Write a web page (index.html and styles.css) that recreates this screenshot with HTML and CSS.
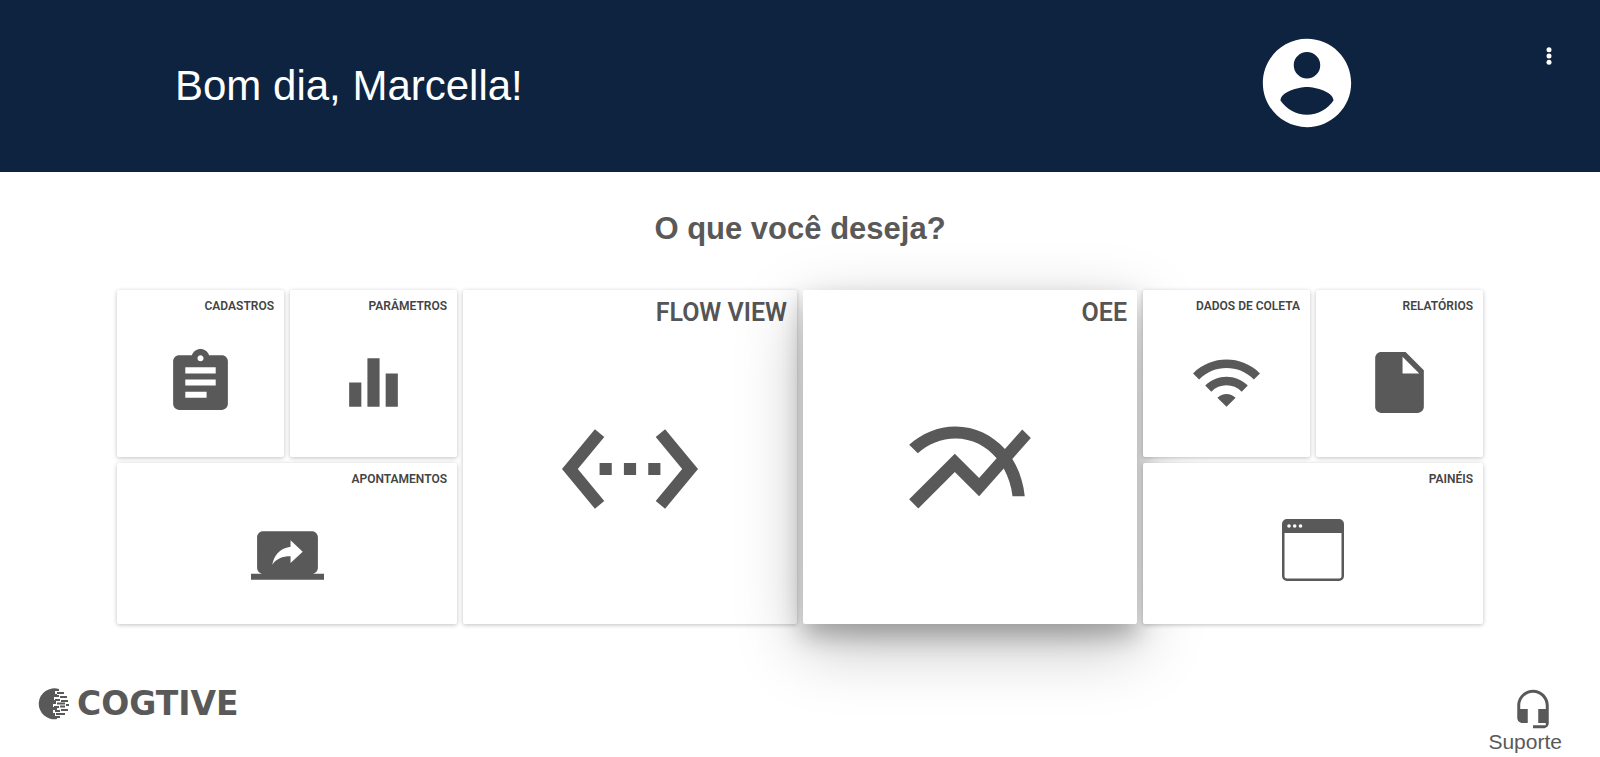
FILE: index.html
```html
<!DOCTYPE html>
<html lang="pt-BR">
<head>
  <meta charset="UTF-8" />
  <meta name="viewport" content="width=device-width, initial-scale=1" />
  <title>Cogtive</title>
  <link rel="stylesheet" href="styles.css">
</head>
<body>
  <header class="header">
    <h1 class="greeting">Bom dia, Marcella!</h1>
    <svg class="avatar" viewBox="0 0 24 24" aria-hidden="true"><path d="M12 2C6.48 2 2 6.48 2 12s4.48 10 10 10 10-4.48 10-10S17.52 2 12 2zm0 3c1.66 0 3 1.34 3 3s-1.34 3-3 3-3-1.34-3-3 1.34-3 3-3zm0 14.2c-2.5 0-4.71-1.28-6-3.22.03-1.99 4-3.08 6-3.08 1.99 0 5.97 1.09 6 3.08-1.29 1.94-3.5 3.22-6 3.22z"/></svg>
    <button class="menu" type="button" aria-label="Menu">
      <svg viewBox="0 0 24 24"><circle cx="12" cy="5.700" r="2.500"/><circle cx="12" cy="12" r="2.500"/><circle cx="12" cy="18.300" r="2.500"/></svg>
    </button>
  </header>

  <main class="main">
    <h2 class="question">O que você deseja?</h2>
    <nav class="cards">
      <a class="card" href="#cadastros">
        <span class="label">Cadastros</span>
        <svg class="icon" viewBox="0 0 24 24"><path d="M19 3h-4.18C14.4 1.84 13.3 1 12 1c-1.3 0-2.4.84-2.82 2H5c-1.1 0-2 .9-2 2v14c0 1.1.9 2 2 2h14c1.1 0 2-.9 2-2V5c0-1.1-.9-2-2-2zm-7 0c.55 0 1 .45 1 1s-.45 1-1 1-1-.45-1-1 .45-1 1-1zm2 14H7v-2h7v2zm3-4H7v-2h10v2zm0-4H7V7h10v2z"/></svg>
      </a>
      <a class="card" href="#parametros">
        <span class="label">Parâmetros</span>
        <svg class="icon" viewBox="0 0 24 24"><path d="M10 20h4V4h-4v16zm-6 0h4v-8H4v8zM16 9v11h4V9h-4z"/></svg>
      </a>
      <a class="card big" href="#flow-view">
        <span class="label">Flow View</span>
        <svg class="icon" viewBox="0 0 24 24"><path d="M7.77 6.76L6.23 5.48.82 12l5.41 6.52 1.54-1.28L3.42 12l4.35-5.24zM7 13h2v-2H7v2zm10-2h-2v2h2v-2zm-6 2h2v-2h-2v2zm6.77-7.52l-1.54 1.28L20.58 12l-4.35 5.24 1.54 1.28L23.18 12l-5.41-6.52z"/></svg>
      </a>
      <a class="card big active" href="#oee">
        <span class="label">OEE</span>
        <svg class="icon" viewBox="0 0 24 24"><path d="M22 6.92l-1.41-1.41-2.85 3.21C15.68 6.4 12.83 5 9.61 5 6.72 5 4.07 6.16 2 8l1.42 1.42C5.12 7.93 7.27 7 9.61 7c2.74 0 5.09 1.26 6.77 3.24l-2.88 3.24-4-4L2 16.99l1.5 1.5 6-6.01 4 4 4.05-4.55c.75 1.35 1.25 2.9 1.44 4.55H21c-.22-2.3-.95-4.39-2.04-6.14L22 6.92z"/></svg>
      </a>
      <a class="card" href="#dados-de-coleta">
        <span class="label">Dados de coleta</span>
        <svg class="icon" viewBox="0 0 24 24"><path d="M1 9l2 2c4.97-4.97 13.03-4.97 18 0l2-2C16.93 2.93 7.08 2.93 1 9zm8 8l3 3 3-3c-1.65-1.66-4.34-1.66-6 0zm-4-4l2 2c2.76-2.76 7.24-2.76 10 0l2-2C15.14 9.14 8.87 9.14 5 13z"/></svg>
      </a>
      <a class="card" href="#relatorios">
        <span class="label">Relatórios</span>
        <svg class="icon" viewBox="0 0 24 24"><path d="M6 2c-1.1 0-1.99.9-1.99 2L4 20c0 1.1.89 2 1.99 2H18c1.1 0 2-.9 2-2V8l-6-6H6zm7 7V3.5L18.5 9H13z"/></svg>
      </a>
      <a class="card wide" href="#apontamentos">
        <span class="label">Apontamentos</span>
        <svg class="icon" viewBox="0 0 24 24"><path d="M20 18c1.1 0 1.99-.9 1.99-2L22 6c0-1.11-.9-2-2-2H4c-1.11 0-2 .89-2 2v10c0 1.1.89 2 2 2H0v2h24v-2h-4zm-7-3.53v-2.19c-2.78 0-4.61.85-6 2.72.56-2.67 2.11-5.33 6-5.87V7l4 3.73-4 3.74z"/></svg>
      </a>
      <a class="card wide last" href="#paineis">
        <span class="label">Painéis</span>
        <svg class="icon" viewBox="0 0 73 73"><path fill-rule="evenodd" d="M10 0h52a5 5 0 0 1 5 5v52a5 5 0 0 1-5 5H10a5 5 0 0 1-5-5V5a5 5 0 0 1 5-5zM7.500 14v43a2.500 2.500 0 0 0 2.500 2.500h52a2.500 2.500 0 0 0 2.500-2.500V14z"/><g class="dots"><circle cx="12" cy="7" r="1.800"/><circle cx="17.700" cy="7" r="1.800"/><circle cx="23.500" cy="7" r="1.800"/></g></svg>
      </a>
    </nav>
  </main>

  <footer class="footer">
    <div class="brand">
      <svg class="brand-mark" viewBox="0 0 32 32" aria-hidden="true">
        <path d="M21 1A15.500 15.500 0 1 0 19 31v-2h-2v-4h-2v-3h4v-3h-4v-3h3v-4h-2V9h3V6h-2V3h4z"/>
        <path d="M19 4h7v2h-7zM16 7h5v2h-5zM22 8h7v2h-7zM17 11h5v2h-5zM23 12h7v2h-7zM19 14.500h8v2h-8zM28 16h3v2h-3zM16 18h5v2h-5zM22 17.500h5v2h-5zM23 21h7v2h-7zM17 22h5v2h-5zM18 25h9v2h-9zM17 28h5v2h-5z"/>
      </svg>
      <span class="brand-name">COGTIVE</span>
    </div>
    <a class="support" href="#suporte">
      <svg class="support-icon" viewBox="0 0 24 24"><path d="M12 1c-4.970 0-9 4.030-9 9v7c0 1.660 1.340 3 3 3h3v-8H4.700v-2c0-4 3.300-7.300 7.300-7.300s7.300 3.300 7.300 7.300v2H15v8h4.300v1.300H12V23h6c1.660 0 3-1.340 3-3V10c0-4.970-4.030-9-9-9z"/></svg>
      Suporte
    </a>
  </footer>
</body>
</html>
```
FILE: styles.css
```css
* {
  box-sizing: border-box;
}
body {
  margin: 0;
  min-height: 100vh;
  display: flex;
  flex-direction: column;
  background: #fff;
  color: #595959;
  font-family: "Liberation Sans", Arial, sans-serif;
}
a {
  color: inherit;
  text-decoration: none;
}
svg {
  display: block;
  fill: currentColor;
}

/* Header */
.header {
  display: flex;
  align-items: flex-start;
  padding: 30px 27px 36px 175px;
  background: #0e2340;
  color: #fff;
}
.greeting {
  flex: 1;
  margin: 32px 0 0;
  font-size: 42px;
  font-weight: 400;
  line-height: 48px;
}
.avatar {
  width: 106px;
  height: 106px;
}
.menu {
  margin-left: 165px;
  padding: 14px 12px;
  border: none;
  background: none;
  color: #fff;
  cursor: pointer;
}
.menu svg {
  width: 24px;
  height: 24px;
}

/* Cards */
.main {
  flex: 1;
  padding: 0 117px;
}
.question {
  margin: 38px 0 42px;
  font-size: 31px;
  line-height: 38px;
  text-align: center;
}
.cards {
  display: grid;
  grid-template-columns: 1fr 1fr 2fr 2fr 1fr 1fr;
  grid-template-rows: auto 1fr;
  gap: 6px;
}
.card {
  display: grid;
  justify-items: center;
  align-items: center;
  aspect-ratio: 1;
  background: #fff;
  border-radius: 2px;
  box-shadow: 0 1px 4px rgba(0, 0, 0, 0.25);
}
.label,
.icon {
  grid-area: 1 / 1;
}
.label {
  justify-self: end;
  align-self: start;
  padding: 10px;
  color: #444;
  font-family: Roboto, sans-serif;
  font-size: 12px;
  font-weight: 600;
  line-height: 12px;
  text-transform: uppercase;
}
.icon {
  width: 73px;
  height: 73px;
  margin-top: 18px;
}
.big {
  grid-row: span 2;
}
.big .label {
  color: #555;
  font-size: 25px;
  line-height: 25px;
}
.big .icon {
  width: 146px;
  height: 146px;
  margin-top: 24px;
}
.wide {
  grid-column: span 2;
  aspect-ratio: auto;
}
.wide .icon {
  margin-top: 24px;
}
.last {
  grid-column: 5 / span 2;
}
.active {
  box-shadow: 0 22px 66px rgba(0, 0, 0, 0.25), 0 12px 24px rgba(0, 0, 0, 0.25);
}
.dots {
  fill: #fff;
}

/* Footer */
.footer {
  display: flex;
  justify-content: space-between;
  align-items: flex-start;
  padding: 0 38px 3px;
}
.brand {
  display: flex;
  align-items: center;
  gap: 7px;
}
.brand-mark {
  width: 32px;
  height: 32px;
}
.brand-name {
  font-family: "DejaVu Sans", sans-serif;
  font-size: 33px;
  font-weight: 700;
  line-height: 32px;
}
.support {
  display: flex;
  flex-direction: column;
  align-items: center;
  font-size: 21px;
  line-height: 24px;
}
.support-icon {
  width: 42px;
  height: 42px;
  margin-left: 16px;
}
```
